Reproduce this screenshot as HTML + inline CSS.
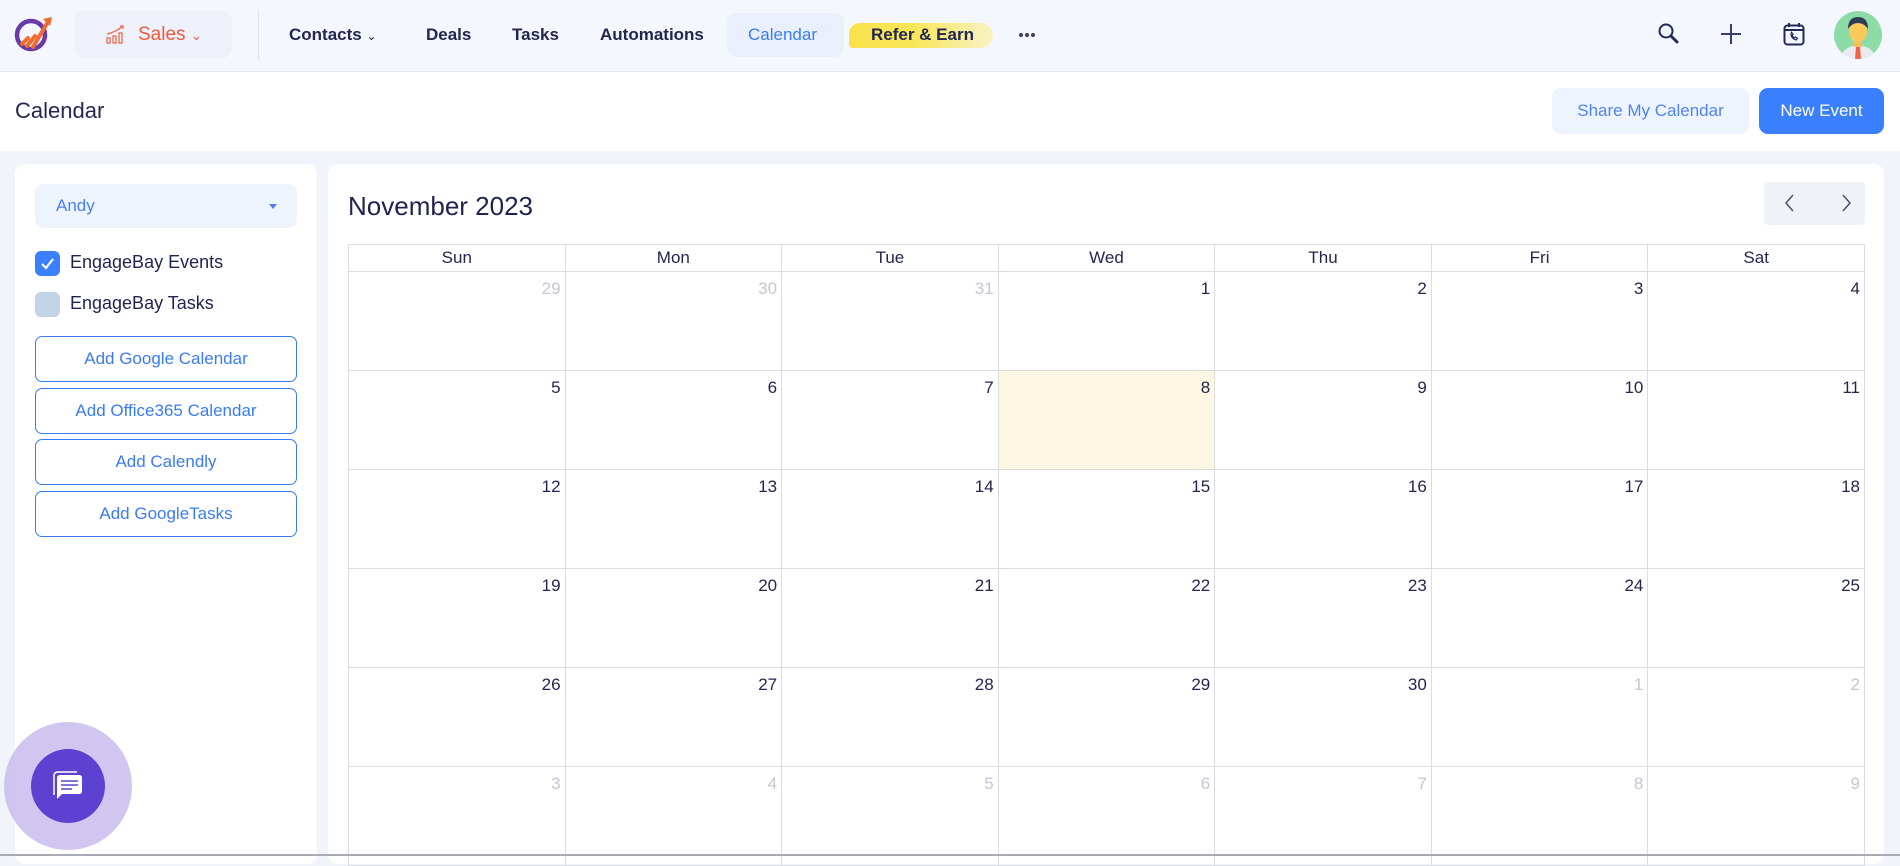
<!DOCTYPE html>
<html><head><meta charset="utf-8"><style>
*{box-sizing:border-box;margin:0;padding:0}
body{width:1900px;height:856px;overflow:hidden;background:#f1f4fb;font-family:"Liberation Sans",sans-serif;color:#1f2350;position:relative}
.abs{position:absolute}
.top{left:0;top:0;width:1900px;height:72px;background:#f4f7fe;border-bottom:1px solid #e6e9f2}
.nav{position:absolute;top:25px;font-size:17px;font-weight:700;color:#23264f;white-space:nowrap}
.hdr{left:0;top:72px;width:1900px;height:79px;background:#fff}
.panel{background:#fff;border-radius:10px}
.btn{position:absolute;left:35px;width:262px;height:46px;border:1.5px solid #3a7bf5;border-radius:7px;color:#3a7bf5;font-size:17px;display:flex;align-items:center;justify-content:center}
table{position:absolute;left:348px;top:244px;width:1517px;border-collapse:collapse;table-layout:fixed}
td,th{border:1px solid #dcdde2;font-weight:400}
th{height:27px;font-size:17px;color:#23264f}
td{height:99px;vertical-align:top;text-align:right;padding:7px 4px 0 0;font-size:17px;color:#23264f}
td.o{color:#c4c6d4}
td.t{background:#fcf6e2}
</style></head><body>
<div class="abs top"></div>
<svg class="abs" style="left:14px;top:14px" width="42" height="40" viewBox="0 0 42 40"><circle cx="17" cy="21" r="14" fill="none" stroke="#6a3aa8" stroke-width="4.5"/><path d="M8 30 L14 24 M13 32 L21 22 M19 33 L35 6" stroke="#f26b2e" stroke-width="4" stroke-linecap="round"/><path d="M29 5 L38 3 L36 12 Z" fill="#f26b2e"/></svg>
<div class="abs" style="left:74px;top:11px;width:158px;height:47px;background:#eff1fa;border-radius:10px"></div>
<svg class="abs" style="left:106px;top:24px" width="22" height="20" viewBox="0 0 22 20"><g fill="none" stroke="#ef6a4e" stroke-width="1.3"><rect x="1" y="14" width="3" height="5"/><rect x="7" y="12" width="3" height="7"/><rect x="13" y="9" width="3" height="10"/><path d="M1 10 Q10 8 17 2 M14 2 L17 2 L17 5"/></g></svg>
<div class="nav" style="left:138px;top:24px;color:#ef5a3c;font-weight:400;font-size:19px">Sales <span style="font-size:13px">&#8964;</span></div>
<div class="abs" style="left:258px;top:10px;width:1px;height:50px;background:#e2e4ec"></div>
<div class="nav" style="left:289px">Contacts <span style="font-weight:400;font-size:12px">&#8964;</span></div>
<div class="nav" style="left:426px">Deals</div>
<div class="nav" style="left:512px">Tasks</div>
<div class="nav" style="left:600px">Automations</div>
<div class="abs" style="left:727px;top:13px;width:117px;height:44px;background:#e9f0fc;border-radius:9px"></div>
<div class="nav" style="left:748px;color:#3a7bf5;font-weight:400">Calendar</div>
<div class="abs" style="left:849px;top:23px;width:144px;height:25px;border-radius:12px 14px 14px 4px;background:linear-gradient(90deg,#f9e24a 0%,#f9e75a 45%,#f8f2c5 100%)"></div>
<div class="nav" style="left:871px">Refer &amp; Earn</div>
<svg class="abs" style="left:1018px;top:32px" width="18" height="6" viewBox="0 0 18 6" fill="#3a3f5e"><circle cx="3" cy="3" r="2"/><circle cx="9" cy="3" r="2"/><circle cx="15" cy="3" r="2"/></svg>
<svg class="abs" style="left:1657px;top:22px" width="24" height="24" viewBox="0 0 24 24" fill="none" stroke="#23295a" stroke-width="2"><circle cx="9" cy="9" r="6.5"/><path d="M14 14 L20 20" stroke-width="3" stroke-linecap="round"/></svg>
<svg class="abs" style="left:1720px;top:23px" width="22" height="22" viewBox="0 0 22 22" stroke="#3a3f6e" stroke-width="2"><path d="M11 1V21M1 11H21"/></svg>
<svg class="abs" style="left:1783px;top:22px" width="22" height="24" viewBox="0 0 22 24" fill="none" stroke="#23295a" stroke-width="2"><rect x="1.5" y="3.5" width="19" height="19" rx="3"/><path d="M1.5 8H20.5M6 1V5M16 1V5"/><path d="M8 12c0 3 2 5 5 6l1.5-1.5-2-1.5-1 .8c-1-.5-2-1.5-2.3-2.5l.8-1-1.5-2z" stroke-width="1.2"/></svg>
<svg class="abs" style="left:1834px;top:11px" width="48" height="48" viewBox="0 0 48 48"><clipPath id="c"><circle cx="24" cy="24" r="24"/></clipPath><g clip-path="url(#c)"><rect width="48" height="48" fill="#8ddca8"/><path d="M6 48 Q8 36 24 34 Q40 36 42 48Z" fill="#e8ecef"/><rect x="20" y="28" width="8" height="8" fill="#f6c15a"/><ellipse cx="24" cy="20" rx="9" ry="11" fill="#fcc95c"/><path d="M14 18 Q14 6 24 6 Q34 6 34 18 Q30 12 24 12 Q18 12 14 18Z" fill="#2c3e50"/><path d="M22 36 L26 36 L27 48 L21 48Z" fill="#f2604c"/></g></svg>

<div class="abs hdr"></div>
<div class="abs" style="left:15px;top:98px;font-size:22px;color:#23264f">Calendar</div>
<div class="abs" style="left:1552px;top:88px;width:197px;height:46px;background:#eef4fe;border-radius:9px;color:#5383f0;font-size:17px;display:flex;align-items:center;justify-content:center">Share My Calendar</div>
<div class="abs" style="left:1759px;top:88px;width:125px;height:46px;background:#3a7ffd;border-radius:9px;color:#fff;font-size:17px;display:flex;align-items:center;justify-content:center">New Event</div>

<div class="abs panel" style="left:15px;top:164px;width:302px;height:700px"></div>
<div class="abs panel" style="left:328px;top:164px;width:1556px;height:700px"></div>

<div class="abs" style="left:35px;top:184px;width:262px;height:44px;background:#eef4fe;border-radius:8px"></div>
<div class="abs" style="left:56px;top:196px;font-size:17px;color:#4d7ef0">Andy</div>
<div class="abs" style="left:269px;top:204px;border:4px solid transparent;border-top:5px solid #4d7ef0"></div>
<div class="abs" style="left:35px;top:251px;width:25px;height:25px;background:#3a7ffd;border-radius:6px"></div>
<svg class="abs" style="left:38px;top:254px" width="19" height="19" viewBox="0 0 19 19"><path d="M4 10 L8 14 L15 5" fill="none" stroke="#fff" stroke-width="2.2"/></svg>
<div class="abs" style="left:70px;top:252px;font-size:18px">EngageBay Events</div>
<div class="abs" style="left:35px;top:292px;width:25px;height:25px;background:#c3d3e6;border-radius:6px"></div>
<div class="abs" style="left:70px;top:293px;font-size:18px">EngageBay Tasks</div>
<div class="btn" style="top:336px">Add Google Calendar</div>
<div class="btn" style="top:388px">Add Office365 Calendar</div>
<div class="btn" style="top:439px">Add Calendly</div>
<div class="btn" style="top:491px">Add GoogleTasks</div>

<div class="abs" style="left:348px;top:191px;font-size:26px;color:#1f2350">November 2023</div>
<div class="abs" style="left:1764px;top:182px;width:101px;height:43px;background:#eff2f6;border-radius:4px"></div>
<svg class="abs" style="left:1783px;top:193px" width="70" height="20" viewBox="0 0 70 20" fill="none" stroke="#4b5368" stroke-width="1.5"><path d="M10 2 L3 10 L10 18M60 2 L67 10 L60 18"/></svg>

<table>
<tr><th>Sun</th><th>Mon</th><th>Tue</th><th>Wed</th><th>Thu</th><th>Fri</th><th>Sat</th></tr>
<tr><td class="o">29</td><td class="o">30</td><td class="o">31</td><td>1</td><td>2</td><td>3</td><td>4</td></tr>
<tr><td>5</td><td>6</td><td>7</td><td class="t">8</td><td>9</td><td>10</td><td>11</td></tr>
<tr><td>12</td><td>13</td><td>14</td><td>15</td><td>16</td><td>17</td><td>18</td></tr>
<tr><td>19</td><td>20</td><td>21</td><td>22</td><td>23</td><td>24</td><td>25</td></tr>
<tr><td>26</td><td>27</td><td>28</td><td>29</td><td>30</td><td class="o">1</td><td class="o">2</td></tr>
<tr><td class="o">3</td><td class="o">4</td><td class="o">5</td><td class="o">6</td><td class="o">7</td><td class="o">8</td><td class="o">9</td></tr>
</table>

<div class="abs" style="left:4px;top:722px;width:128px;height:128px;border-radius:50%;background:rgba(196,184,236,.8)"></div>
<div class="abs" style="left:31px;top:749px;width:74px;height:74px;border-radius:50%;background:#5b42d1"></div>
<svg class="abs" style="left:50px;top:768px" width="36" height="36" viewBox="0 0 36 36"><path d="M4 27 V8 Q4 4 8 4 H27" fill="none" stroke="#fff" stroke-width="1.5"/><path d="M7 10 Q7 7 10 7 H29 Q32 7 32 10 V23 Q32 26 29 26 H12 L7 31Z" fill="#fff"/><path d="M11 13H28M11 17H28M11 21H22" stroke="#5b42d1" stroke-width="1.5"/></svg>
<div class="abs" style="left:0;top:854px;width:1900px;height:2px;background:#a8abb4"></div>
</body></html>
